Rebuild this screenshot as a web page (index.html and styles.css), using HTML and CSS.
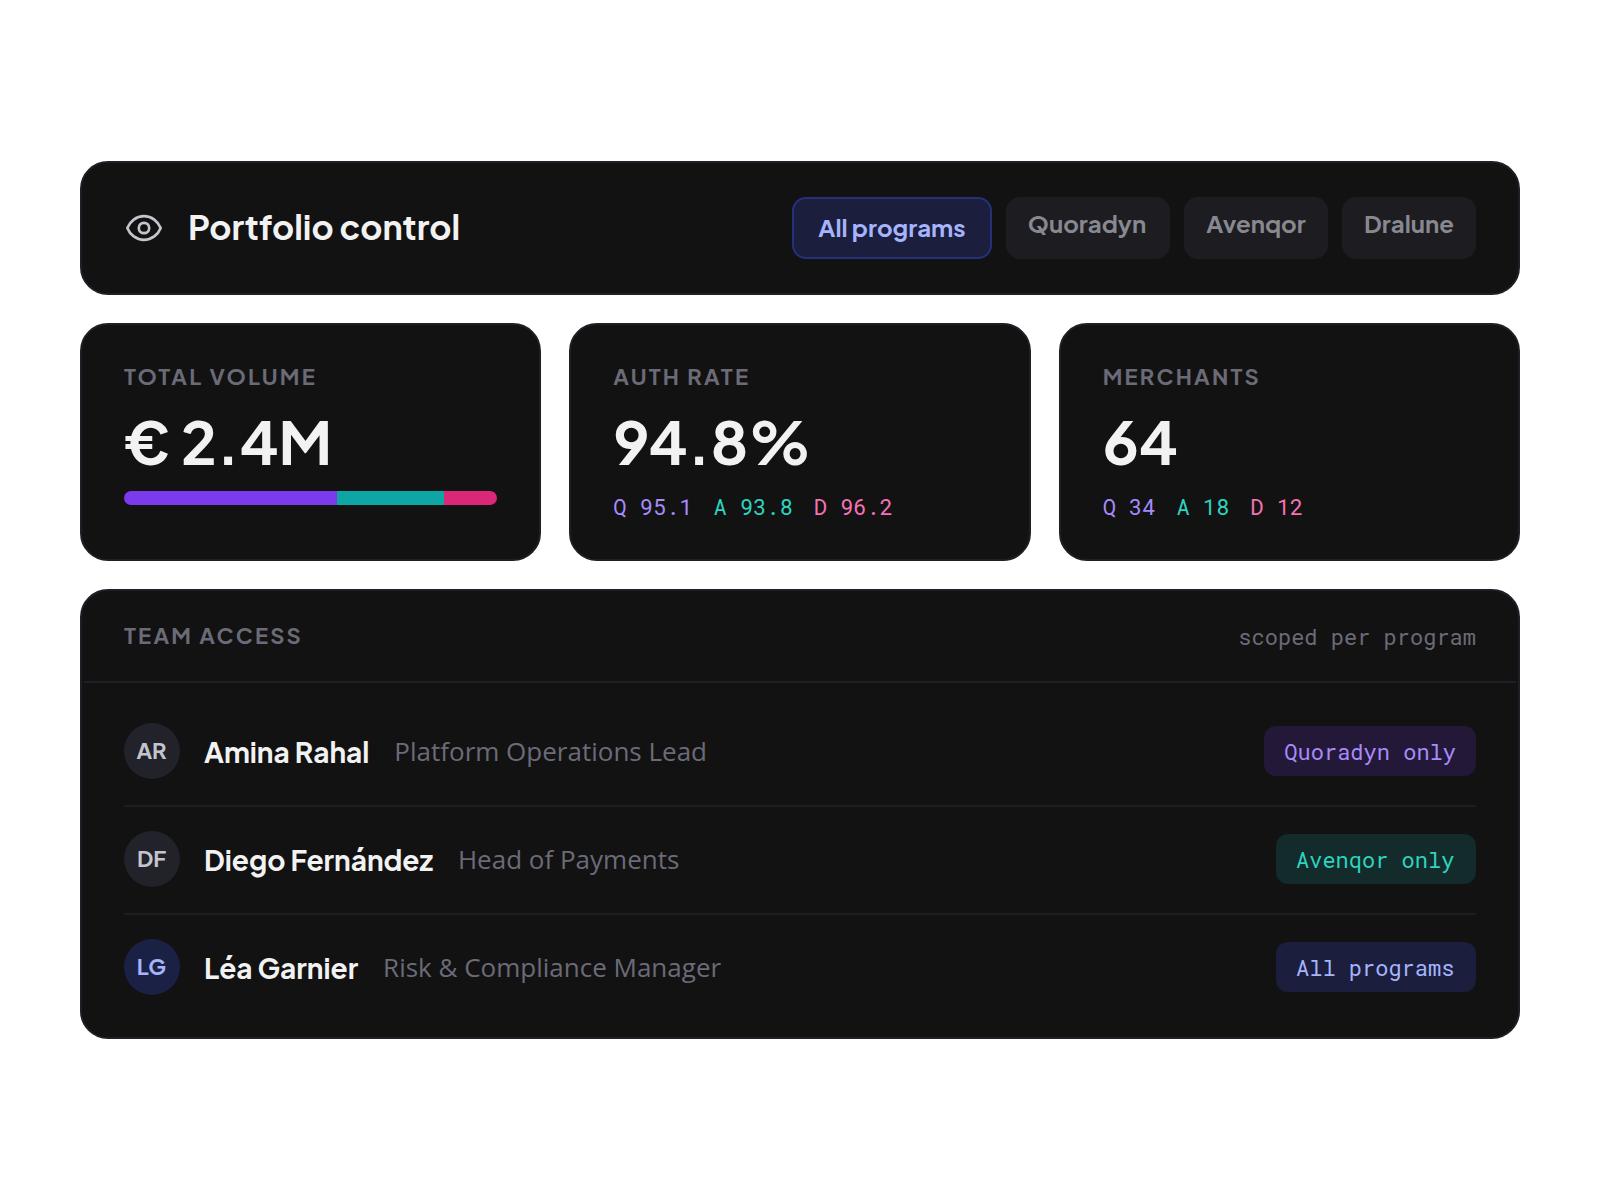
FILE: index.html
```html
<!DOCTYPE html>
<html lang="en">

<head>
    <meta charset="UTF-8">
    <meta name="viewport" content="width=device-width, initial-scale=1.0">
    <title>Portfolio control</title>
    <link rel="stylesheet" href="styles.css">
</head>

<body>
    <main class="dashboard">
        <header class="card topbar">
            <svg class="eye" viewBox="0 0 40 40" fill="none" stroke="currentColor" stroke-width="2.7" stroke-linejoin="round">
                <path d="M3.3 20C6 13.2 12.2 8.2 20 8.2S34 13.2 36.7 20C34 26.8 27.8 31.8 20 31.8S6 26.8 3.3 20Z" />
                <circle cx="20" cy="20" r="5.2" />
            </svg>
            <h1 class="title">Portfolio control</h1>
            <nav class="tabs">
                <a class="tab active">All programs</a>
                <a class="tab quoradyn">Quoradyn</a>
                <a class="tab avenqor">Avenqor</a>
                <a class="tab dralune">Dralune</a>
            </nav>
        </header>

        <section class="stats">
            <div class="card stat">
                <h2 class="label">Total volume</h2>
                <div class="value">€ 2.4M</div>
                <div class="bar">
                    <span class="bar-q" style="width: 57.14%"></span>
                    <span class="bar-a" style="width: 28.57%"></span>
                    <span class="bar-d" style="width: 14.29%"></span>
                </div>
            </div>
            <div class="card stat">
                <h2 class="label">Auth rate</h2>
                <div class="value">94.8%</div>
                <div class="split">
                    <span class="q">Q 95.1</span>
                    <span class="a">A 93.8</span>
                    <span class="d">D 96.2</span>
                </div>
            </div>
            <div class="card stat">
                <h2 class="label">Merchants</h2>
                <div class="value">64</div>
                <div class="split">
                    <span class="q">Q 34</span>
                    <span class="a">A 18</span>
                    <span class="d">D 12</span>
                </div>
            </div>
        </section>

        <section class="card team">
            <div class="team-head">
                <h2 class="label">Team access</h2>
                <span class="note">scoped per program</span>
            </div>
            <ul class="members">
                <li class="member">
                    <span class="avatar">AR</span>
                    <span class="name">Amina Rahal</span>
                    <span class="role">Platform Operations Lead</span>
                    <span class="pill pill-q">Quoradyn only</span>
                </li>
                <li class="member">
                    <span class="avatar">DF</span>
                    <span class="name">Diego Fernández</span>
                    <span class="role">Head of Payments</span>
                    <span class="pill pill-a">Avenqor only</span>
                </li>
                <li class="member">
                    <span class="avatar avatar-all">LG</span>
                    <span class="name">Léa Garnier</span>
                    <span class="role">Risk &amp; Compliance Manager</span>
                    <span class="pill pill-all">All programs</span>
                </li>
            </ul>
        </section>
    </main>
</body>

</html>
```

FILE: styles.css
```css
* {
    box-sizing: border-box;
    margin: 0;
    padding: 0;
}

body {
    min-height: 1200px;
    display: flex;
    align-items: center;
    justify-content: center;
    background-color: #ffffff;
    font-family: "Plus Jakarta Sans", Inter, sans-serif;
    color: #f2f2f2;
}

.dashboard {
    width: 1440px;
    display: flex;
    flex-direction: column;
    gap: 28px;
}

.card {
    background-color: #121212;
    border: 2px solid #1f1f27;
    border-radius: 28px;
}

/* top bar */
.topbar {
    height: 134px;
    padding: 0 42px;
    display: flex;
    align-items: center;
}

.eye {
    width: 40px;
    height: 40px;
    margin-right: 24px;
    color: #c4c4cc;
}

.title {
    padding-bottom: 2px;
    font-size: 34px;
    line-height: 44px;
    font-weight: 700;
}

.tabs {
    display: flex;
    gap: 14px;
    margin-left: auto;
}

.tab {
    height: 62px;
    border-radius: 14px;
    background-color: #1c1c21;
    color: #888890;
    font-size: 24px;
    line-height: 52px;
    font-weight: 700;
    text-align: center;
    white-space: nowrap;
}

.tab.active {
    width: 200px;
    border: 2px solid #24307a;
    background-color: #1b1e3c;
    color: #a5b4fc;
    line-height: 56px;
}

.quoradyn {
    width: 164px;
    padding-right: 2px;
}

.avenqor {
    width: 144px;
}

.dralune {
    width: 134px;
}

/* numbers */
.stats {
    display: grid;
    grid-template-columns: repeat(3, 1fr);
    gap: 28px;
}

.stat {
    height: 238px;
    padding: 37px 42px 0;
}

.label {
    color: #6b6b78;
    font-size: 22px;
    line-height: 28px;
    font-weight: 700;
    letter-spacing: 2.2px;
    text-transform: uppercase;
    white-space: nowrap;
}

.value {
    margin-top: 13px;
    font-size: 60px;
    line-height: 76px;
    font-weight: 700;
    white-space: nowrap;
}

.bar {
    display: flex;
    height: 14px;
    margin-top: 12px;
    border-radius: 7px;
    overflow: hidden;
}

.bar-q {
    background-color: #7c3aed;
}

.bar-a {
    background-color: #0fa5a5;
}

.bar-d {
    background-color: #db2777;
}

.split {
    display: flex;
    gap: 21px;
    margin-top: 13px;
}

.split,
.note,
.pill {
    font-family: "Roboto Mono", "DejaVu Sans Mono", monospace;
    font-size: 22px;
    line-height: 30px;
    white-space: nowrap;
}

.q {
    color: #a78bfa;
}

.a {
    color: #2dd4bf;
}

.d {
    color: #f472b6;
}

/* team */
.team {
    height: 450px;
    padding: 0 2px;
}

.team-head {
    display: flex;
    justify-content: space-between;
    align-items: center;
    height: 92px;
    padding: 0 40px;
    border-bottom: 2px solid #1f1f27;
}

.team-head .label {
    padding-bottom: 2px;
}

.note {
    padding-top: 2px;
    color: #6b6b78;
}

.members {
    padding: 16px 40px 0;
    list-style: none;
}

.member {
    display: flex;
    align-items: center;
    height: 108px;
    padding: 24px 0 26px;
    border-bottom: 2px solid #1c1c21;
}

.member:last-child {
    height: 106px;
    border-bottom: none;
}

.avatar {
    width: 56px;
    height: 56px;
    margin-right: 24px;
    padding-right: 1px;
    border-radius: 50%;
    background-color: #22222a;
    color: #c4c4cc;
    font-size: 22px;
    line-height: 54px;
    font-weight: 700;
    text-align: center;
}

.avatar-all {
    background-color: #1b2145;
    color: #a5b4fc;
}

.name {
    padding-top: 2px;
    font-size: 28px;
    line-height: 36px;
    font-weight: 700;
    white-space: nowrap;
}

.role {
    margin-left: 25px;
    color: #6b6b78;
    font-family: "Open Sans", sans-serif;
    font-size: 26px;
    line-height: 36px;
    white-space: nowrap;
}

.pill {
    height: 50px;
    margin-left: auto;
    padding: 0 20px;
    border-radius: 12px;
    line-height: 52px;
}

.pill-q {
    background-color: #241838;
    color: #a78bfa;
}

.pill-a {
    width: 200px;
    background-color: #132b2b;
    color: #2dd4bf;
}

.pill-all {
    width: 200px;
    background-color: #1b1e3c;
    color: #a5b4fc;
}
```
